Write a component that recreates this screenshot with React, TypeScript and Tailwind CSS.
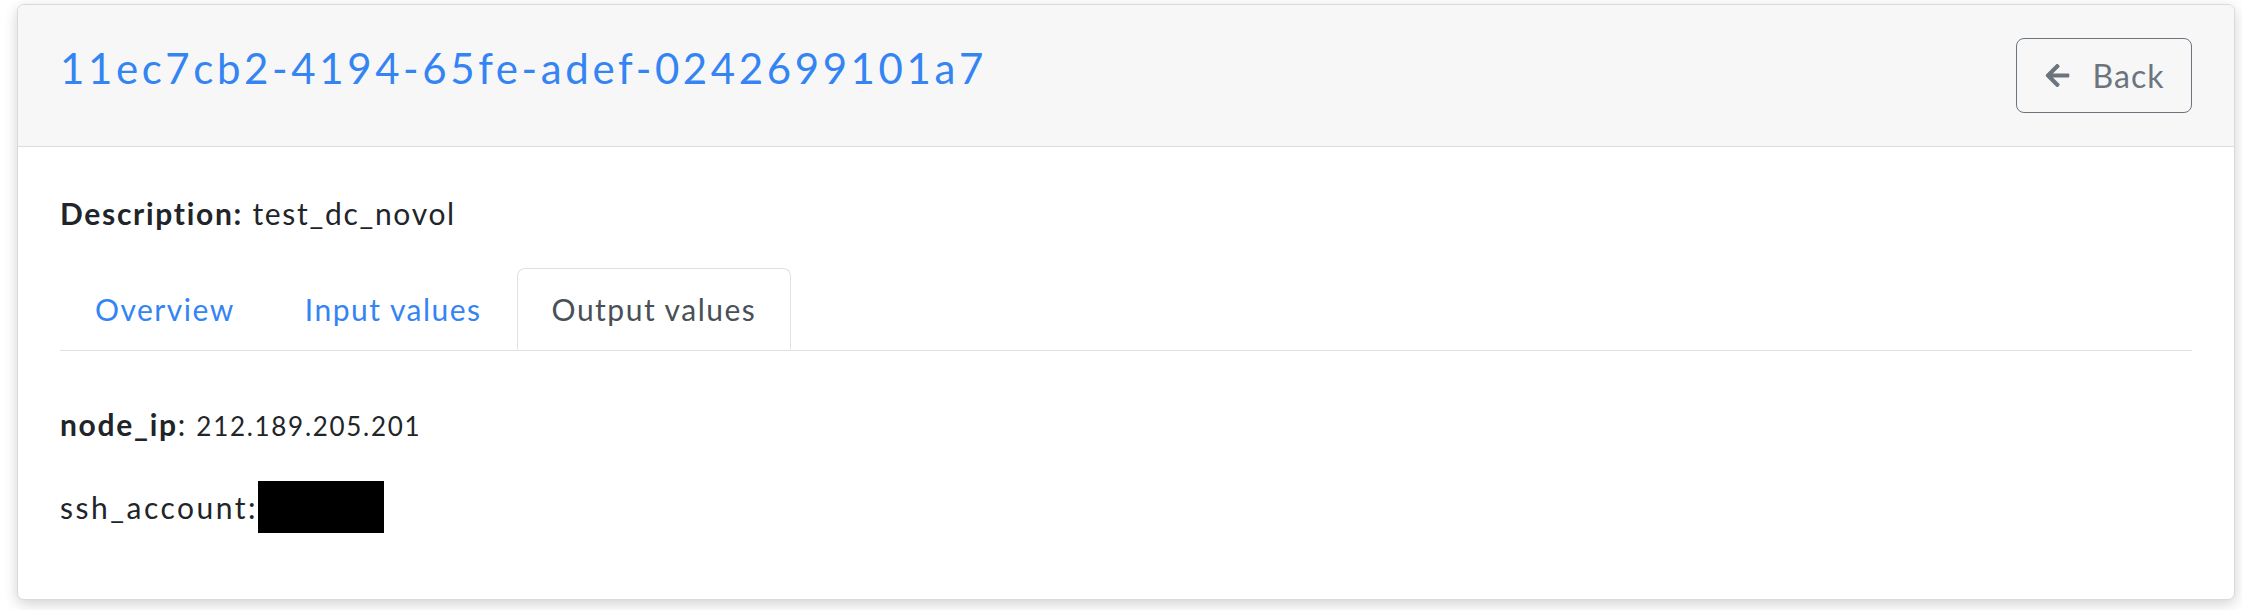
import React from "react";
import { FaArrowLeft } from "react-icons/fa";

const App: React.FC = () => {
  return (
    <div className="min-h-screen bg-white pt-[4px] pl-[17px] pr-[7px] font-['Lato','Liberation_Sans',sans-serif]">
      <div className="bg-white rounded-[7px] border border-[#dadada] shadow-[0_4px_14px_rgba(0,0,0,0.18)] overflow-hidden">
        {/* Header */}
        <div className="h-[142px] flex items-center justify-between px-[42px] bg-[#f7f7f7] border-b border-[#dcdcdc]">
          <h1 className="mb-[15px] text-[42px] leading-none tracking-[3.6px] text-[#3484f4] font-normal">
            11ec7cb2-4194-65fe-adef-0242699101a7
          </h1>
          <button className="w-[176px] h-[75px] flex items-center justify-center gap-[22px] border border-[#6c757d] rounded-[8px] text-[#6c757d] text-[32px] tracking-[1px]">
            <FaArrowLeft className="w-[27px] h-[27px]" />
            <span>Back</span>
          </button>
        </div>

        {/* Body */}
        <div className="px-[42px] pt-[44px] pb-[66px] text-[#212529] tracking-[1.7px]">
          <p className="text-[30px] leading-[44px]">
            <span className="font-bold">Description:</span> test_dc_novol
          </p>

          <div className="mt-[33px] flex border-b border-[#dee2e6] tracking-[1.5px]">
            <div className="px-[34px] h-[82px] flex items-center text-[30px] text-[#3484f4] border border-transparent">
              Overview
            </div>
            <div className="px-[34px] h-[82px] flex items-center text-[30px] text-[#3484f4] border border-transparent">
              Input values
            </div>
            <div className="px-[34px] h-[82px] -mb-px flex items-center text-[30px] text-[#495057] bg-white border border-[#dee2e6] border-b-white rounded-t-[8px]">
              Output values
            </div>
          </div>

          <div className="pt-[51px] flex flex-col gap-[33px]">
            <div className="text-[30px] leading-[44px]">
              <span className="font-bold">node_ip</span>:{" "}
              <span className="text-[26px]">212.189.205.201</span>
            </div>
            <div className="text-[30px] leading-[44px] flex items-center tracking-[2.5px]">
              <span>ssh_account:</span>
              <span className="inline-block w-[126px] h-[52px] bg-black" />
            </div>
          </div>
        </div>
      </div>
    </div>
  );
};

export default App;
